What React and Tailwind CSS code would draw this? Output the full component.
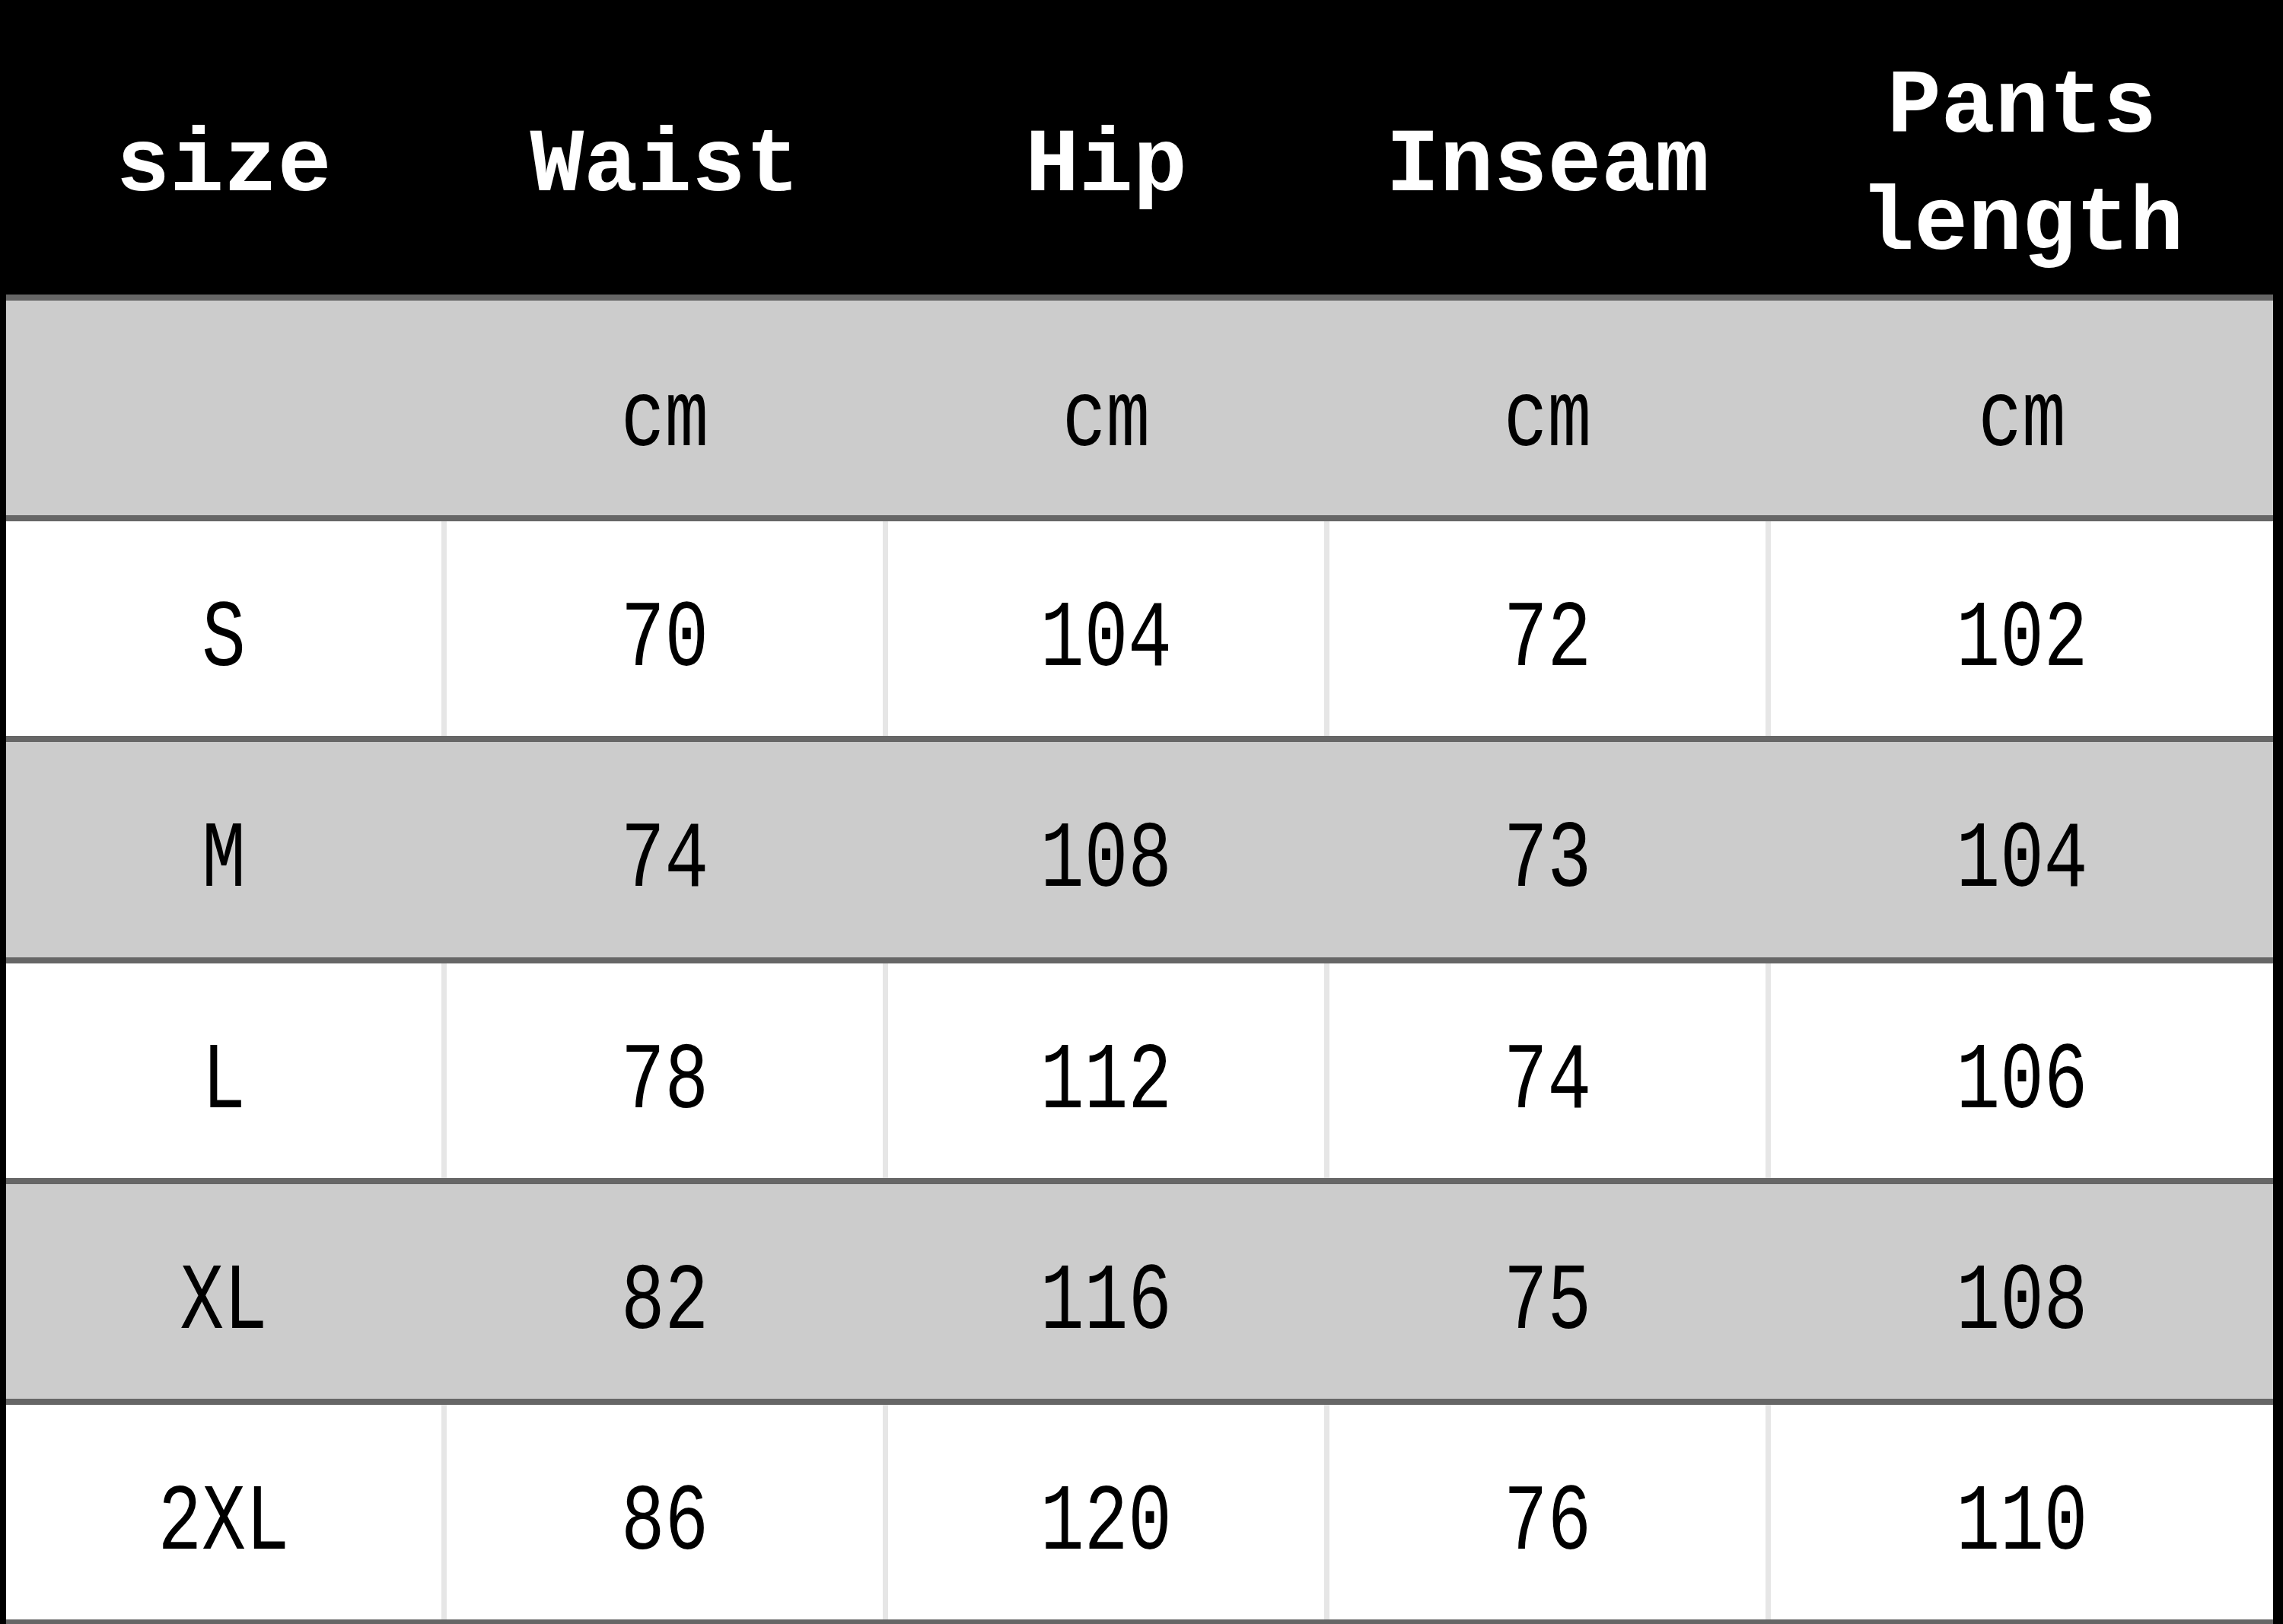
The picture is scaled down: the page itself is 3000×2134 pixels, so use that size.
const headers = [['size'], ['Waist'], ['Hip'], ['Inseam'], ['Pants', 'length']];

const rows = [
  ['', 'cm', 'cm', 'cm', 'cm'],
  ['S', '70', '104', '72', '102'],
  ['M', '74', '108', '73', '104'],
  ['L', '78', '112', '74', '106'],
  ['XL', '82', '116', '75', '108'],
  ['2XL', '86', '120', '76', '110'],
];

const gridCols = 'grid grid-cols-[572px_580px_580px_580px_1fr]';

function HeaderRow() {
  return (
    <div className={`${gridCols} h-[387px] shrink-0 bg-black pt-[50px] font-['Liberation_Mono',monospace] text-[118px] font-bold leading-[154px] text-white`}>
      {headers.map((lines, i) => (
        <div
          key={i}
          className={`flex flex-col items-center justify-center ${i > 0 ? 'border-l-[7px] border-black' : ''}`}
        >
          {lines.map((line) => (
            <span key={line}>{line}</span>
          ))}
        </div>
      ))}
    </div>
  );
}

function BodyRow({ cells, shaded, last }) {
  const bg = shaded ? 'bg-[#cccccc]' : 'bg-white';
  const divider = shaded ? 'border-[#cccccc]' : 'border-[#e6e6e6]';
  return (
    <div
      className={`${gridCols} flex-1 border-t-8 border-[#666666] ${bg} ${last ? 'border-b-[6px]' : ''}`}
    >
      {cells.map((value, i) => (
        <div
          key={i}
          className={`flex items-center justify-center pt-[32px] ${i > 0 ? `border-l-[7px] ${divider}` : ''}`}
        >
          <span className="inline-block scale-y-[1.3] font-['Liberation_Mono',monospace] text-[96px] leading-none text-black">
            {value}
          </span>
        </div>
      ))}
    </div>
  );
}

export default function App() {
  return (
    <div className="flex h-[2134px] w-[3000px] flex-col border-l-8 border-r-[13px] border-black bg-black">
      <HeaderRow />
      {rows.map((cells, i) => (
        <BodyRow key={i} cells={cells} shaded={i % 2 === 0} last={i === rows.length - 1} />
      ))}
    </div>
  );
}
